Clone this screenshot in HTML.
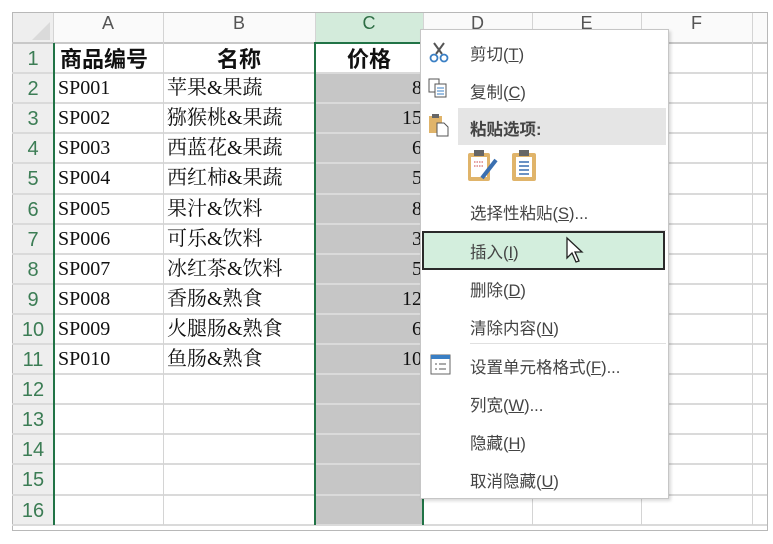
<!DOCTYPE html>
<html><head><meta charset="utf-8"><style>
*{margin:0;padding:0;box-sizing:border-box}
body{width:773px;height:544px;background:#fff;position:relative;overflow:hidden;font-family:"Liberation Serif","Noto Serif CJK SC",serif}
.a{position:absolute}
.hl{position:absolute;left:12px;width:755px;height:2px;background:#dadada}
.vl{position:absolute;top:13px;width:1px;height:512px;background:#d4d4d4}
.rn{position:absolute;left:13px;width:40px;text-align:center;color:#3c7d55;font:20px "Liberation Sans",sans-serif;height:30px;line-height:33px}
.c{position:absolute;font-size:20px;height:30px;line-height:30px;color:#111;white-space:nowrap}
.ch{position:absolute;top:13px;height:30px;line-height:32px;text-align:center;font:18px "Liberation Sans",sans-serif;color:#555}
.m{position:absolute;left:470px;font:16.5px "Liberation Sans","Noto Sans CJK SC",sans-serif;color:#444;white-space:nowrap}
u{text-decoration:underline}
</style></head><body>
<div class="a" style="left:12px;top:12px;width:756px;height:519px;border:1px solid #b8b8b8"></div>
<div class="a" style="left:13px;top:13px;width:40px;height:512px;background:#eeeeee"></div>
<div class="a" style="left:53px;top:13px;width:714px;height:30px;background:#fafafa"></div>
<div class="a" style="left:315px;top:13px;width:108px;height:30px;background:#d3ebdb"></div>
<div class="a" style="left:315px;top:73px;width:108px;height:452px;background:#c6c6c6"></div>
<svg class="a" style="left:30px;top:20px" width="20" height="20"><polygon points="20,2 20,20 2,20" fill="#dadada"/></svg>
<div class="hl" style="top:42px;background:#c8c8c8"></div>
<div class="hl" style="top:72px"></div><div class="hl" style="top:102px"></div><div class="hl" style="top:132px"></div><div class="hl" style="top:162px"></div><div class="hl" style="top:193px"></div><div class="hl" style="top:223px"></div><div class="hl" style="top:253px"></div><div class="hl" style="top:283px"></div><div class="hl" style="top:313px"></div><div class="hl" style="top:343px"></div><div class="hl" style="top:373px"></div><div class="hl" style="top:403px"></div><div class="hl" style="top:433px"></div><div class="hl" style="top:463px"></div><div class="hl" style="top:494px"></div><div class="hl" style="top:524px"></div>
<div class="vl" style="left:53px"></div><div class="vl" style="left:163px"></div><div class="vl" style="left:315px"></div><div class="vl" style="left:423px"></div><div class="vl" style="left:532px"></div><div class="vl" style="left:641px"></div><div class="vl" style="left:752px"></div>
<div class="ch" style="left:53px;width:110px">A</div><div class="ch" style="left:163px;width:152px">B</div><div class="ch" style="left:315px;width:108px;color:#2e6e45">C</div><div class="ch" style="left:423px;width:109px">D</div><div class="ch" style="left:532px;width:109px">E</div><div class="ch" style="left:641px;width:111px">F</div>
<div class="a" style="left:53px;top:43px;width:2px;height:482px;background:#217346"></div>
<div class="a" style="left:314px;top:42px;width:2px;height:483px;background:#217346"></div>
<div class="a" style="left:422px;top:42px;width:2px;height:483px;background:#217346"></div>
<div class="a" style="left:314px;top:42px;width:110px;height:2px;background:#217346"></div>
<div class="rn" style="top:43px">1</div><div class="rn" style="top:73px">2</div><div class="rn" style="top:103px">3</div><div class="rn" style="top:133px">4</div><div class="rn" style="top:163px">5</div><div class="rn" style="top:194px">6</div><div class="rn" style="top:224px">7</div><div class="rn" style="top:254px">8</div><div class="rn" style="top:284px">9</div><div class="rn" style="top:314px">10</div><div class="rn" style="top:344px">11</div><div class="rn" style="top:374px">12</div><div class="rn" style="top:404px">13</div><div class="rn" style="top:434px">14</div><div class="rn" style="top:464px">15</div><div class="rn" style="top:495px">16</div>
<div class="c" style="left:60px;top:43px;font-size:22px;font-weight:bold;font-family:'Noto Sans CJK SC',sans-serif">商品编号</div>
<div class="c" style="left:163px;width:152px;text-align:center;top:43px;font-size:22px;font-weight:bold;font-family:'Noto Sans CJK SC',sans-serif">名称</div>
<div class="c" style="left:315px;width:108px;text-align:center;top:43px;font-size:22px;font-weight:bold;font-family:'Noto Sans CJK SC',sans-serif">价格</div>
<div class="c" style="left:58px;top:73px">SP001</div><div class="c" style="left:167px;top:73px">苹果&amp;果蔬</div>
<div class="c" style="left:58px;top:103px">SP002</div><div class="c" style="left:167px;top:103px">猕猴桃&amp;果蔬</div>
<div class="c" style="left:58px;top:133px">SP003</div><div class="c" style="left:167px;top:133px">西蓝花&amp;果蔬</div>
<div class="c" style="left:58px;top:163px">SP004</div><div class="c" style="left:167px;top:163px">西红柿&amp;果蔬</div>
<div class="c" style="left:58px;top:194px">SP005</div><div class="c" style="left:167px;top:194px">果汁&amp;饮料</div>
<div class="c" style="left:58px;top:224px">SP006</div><div class="c" style="left:167px;top:224px">可乐&amp;饮料</div>
<div class="c" style="left:58px;top:254px">SP007</div><div class="c" style="left:167px;top:254px">冰红茶&amp;饮料</div>
<div class="c" style="left:58px;top:284px">SP008</div><div class="c" style="left:167px;top:284px">香肠&amp;熟食</div>
<div class="c" style="left:58px;top:314px">SP009</div><div class="c" style="left:167px;top:314px">火腿肠&amp;熟食</div>
<div class="c" style="left:58px;top:344px">SP010</div><div class="c" style="left:167px;top:344px">鱼肠&amp;熟食</div>
<div class="c" style="left:380px;width:42px;text-align:right;top:73px">8</div><div class="c" style="left:380px;width:42px;text-align:right;top:103px">15</div><div class="c" style="left:380px;width:42px;text-align:right;top:133px">6</div><div class="c" style="left:380px;width:42px;text-align:right;top:163px">5</div><div class="c" style="left:380px;width:42px;text-align:right;top:194px">8</div><div class="c" style="left:380px;width:42px;text-align:right;top:224px">3</div><div class="c" style="left:380px;width:42px;text-align:right;top:254px">5</div><div class="c" style="left:380px;width:42px;text-align:right;top:284px">12</div><div class="c" style="left:380px;width:42px;text-align:right;top:314px">6</div><div class="c" style="left:380px;width:42px;text-align:right;top:344px">10</div>
<!-- menu -->
<div class="a" style="left:420px;top:29px;width:249px;height:470px;background:#fff;border:1px solid #c6c6c6;box-shadow:2px 2px 3px rgba(0,0,0,.15)"></div>
<div class="a" style="left:458px;top:108px;width:208px;height:37px;background:#e5e5e5"></div>
<div class="a" style="left:422px;top:231px;width:243px;height:39px;background:#d3eedd;border:2px solid #2a2a2a"></div>
<div class="a" style="left:470px;top:343px;width:196px;height:1px;background:#e0e0e0"></div>
<div class="a" style="left:470px;top:230px;width:196px;height:1px;background:#e0e0e0"></div>
<svg class="a" style="left:428px;top:40px" width="24" height="24"><path d="M6 3 L14 14 M16 3 L8 14" stroke="#555" stroke-width="2"/><circle cx="6" cy="18" r="3.5" fill="none" stroke="#3a7fc4" stroke-width="1.8"/><circle cx="16" cy="18" r="3.5" fill="none" stroke="#3a7fc4" stroke-width="1.8"/></svg>
<svg class="a" style="left:428px;top:78px" width="24" height="22"><rect x="1" y="1" width="10" height="13" fill="#fff" stroke="#555"/><rect x="7" y="6" width="11" height="13" fill="#fff" stroke="#555"/><path d="M9 10h7M9 13h7M9 16h7" stroke="#3a7fc4"/></svg>
<svg class="a" style="left:428px;top:112px" width="24" height="26"><rect x="1" y="4" width="13" height="17" fill="#e0b46a"/><rect x="4" y="2" width="7" height="4" fill="#666"/><path d="M9 11h7l4 4v9H9z" fill="#fff" stroke="#555"/></svg>
<svg class="a" style="left:466px;top:148px" width="34" height="36"><rect x="2" y="5" width="22" height="28" rx="2" fill="#e0b46a"/><rect x="5" y="9" width="16" height="20" fill="#fff"/><rect x="8" y="2" width="10" height="6" fill="#666"/><path d="M8 14h10M8 18h10" stroke="#c44" stroke-dasharray="1.5 1"/><path d="M30 12 L16 30" stroke="#3a6fb0" stroke-width="4"/></svg>
<svg class="a" style="left:510px;top:148px" width="30" height="36"><rect x="2" y="5" width="24" height="28" rx="2" fill="#e0b46a"/><rect x="6" y="9" width="16" height="20" fill="#fff"/><rect x="9" y="2" width="10" height="6" fill="#666"/><path d="M9 14h10M9 18h10M9 22h10M9 26h10" stroke="#3a6fb0" stroke-width="1.5"/></svg>
<svg class="a" style="left:430px;top:354px" width="22" height="22"><rect x="1" y="1" width="19" height="19" fill="#fff" stroke="#666"/><rect x="1" y="1" width="19" height="4" fill="#3a7fc4"/><path d="M5 10h2M9 10h7M5 15h2M9 15h7" stroke="#555"/></svg>
<div class="m" style="top:41px">剪切(<u>T</u>)</div>
<div class="m" style="top:79px">复制(<u>C</u>)</div>
<div class="m" style="top:116px;font-weight:bold">粘贴选项:</div>
<div class="m" style="top:200px">选择性粘贴(<u>S</u>)...</div>
<div class="m" style="top:239px">插入(<u>I</u>)</div>
<div class="m" style="top:277px">删除(<u>D</u>)</div>
<div class="m" style="top:315px">清除内容(<u>N</u>)</div>
<div class="m" style="top:354px">设置单元格格式(<u>F</u>)...</div>
<div class="m" style="top:392px">列宽(<u>W</u>)...</div>
<div class="m" style="top:430px">隐藏(<u>H</u>)</div>
<div class="m" style="top:468px">取消隐藏(<u>U</u>)</div>
<svg class="a" style="left:565px;top:236px" width="20" height="30"><path d="M2 2 L2 22 L7 17 L11 26 L14 25 L10 16 L17 16 Z" fill="#fff" stroke="#222" stroke-width="1.3"/></svg>
</body></html>
